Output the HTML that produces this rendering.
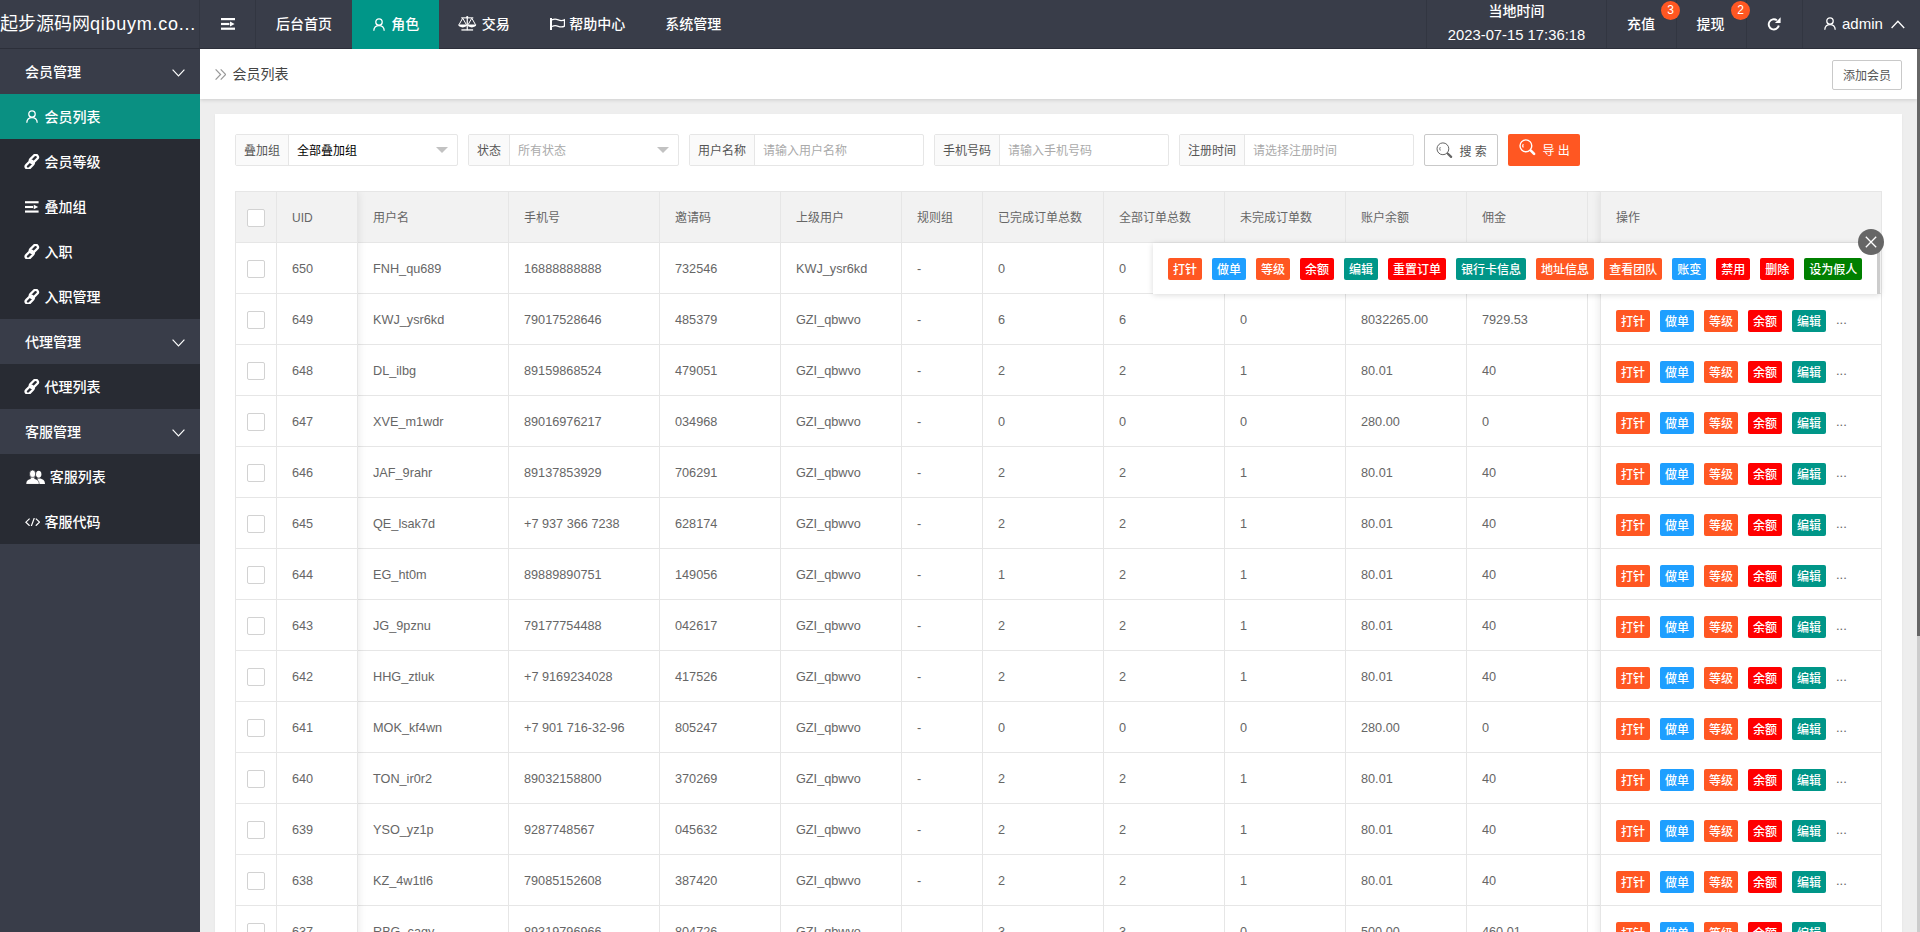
<!DOCTYPE html>
<html lang="zh-CN">
<head>
<meta charset="utf-8">
<title>会员列表</title>
<style>
*{box-sizing:border-box;margin:0;padding:0}
html,body{width:1920px;height:932px;overflow:hidden}
body{font-family:"Liberation Sans","Noto Sans CJK SC",sans-serif;font-size:14px;color:#333;background:#eee;position:relative}
svg{display:block}
ul{list-style:none}

/* ---------- header ---------- */
.hd{position:absolute;left:0;top:0;width:1920px;height:49px;background:#393d49;border-bottom:1px solid #2c2f3a;color:#fff}
.logo{position:absolute;left:0;top:0;width:200px;height:48px;line-height:49px;font-size:18px;white-space:nowrap;overflow:hidden;border-right:1px solid #323641}
.logo b{font-weight:normal;letter-spacing:.75px}
.nav{position:absolute;top:0;height:48px}
.nav .it{position:absolute;top:0;height:48px;line-height:48px;font-size:14px;white-space:nowrap;text-align:left}
.nav .it.bl{border-left:1px solid #333743}
.nav .it.on{background:#009688}
.ic{position:absolute}
.vl{position:absolute;top:0;width:1px;height:48px;background:#323641}
.ni{position:absolute;top:0;height:48px;line-height:48px;font-size:14px;font-weight:500;white-space:nowrap;color:#fff}
.nbg{position:absolute;top:0;height:49px;background:#009688}
.bdg{position:absolute;top:1px;width:19px;height:19px;border-radius:10px;background:#ff5722;color:#fff;font-size:12px;line-height:19px;text-align:center}


/* ---------- side ---------- */
.side{position:absolute;left:0;top:49px;width:200px;height:883px;background:#393d49;color:#fff}
.side li{font-weight:500;position:relative;height:45px;line-height:47px;font-size:14px;white-space:nowrap}
.side li.p{padding-left:25px;background:#393d49}
.side li.c{background:#282b33}
.side li.c span{position:absolute;left:44.5px;top:0}
.side li.on{background:#0a9082}
.side li .ar{position:absolute;left:172px;top:19.800px}

/* ---------- body ---------- */
.main{position:absolute;left:200px;top:49px;width:1717px;height:883px;background:#eee;overflow:hidden}
.bc{position:absolute;left:0;top:0;width:1717px;height:50px;background:#fff;box-shadow:0 1px 4px rgba(0,0,0,.14)}
.bc .t{position:absolute;left:32.5px;top:0;line-height:50px;font-size:14px;color:#444}
.bc .add{position:absolute;left:1632px;top:11px;width:70px;height:30px;line-height:31px;border:1px solid #c9c9c9;border-radius:2px;font-size:12px;color:#555;text-align:center;background:#fff}
.card{position:absolute;left:15px;top:65px;width:1687px;height:900px;background:#fff;box-shadow:0 1px 2px rgba(0,0,0,.06)}
.sb{position:absolute;left:1917px;top:49px;width:3px;height:883px;background:#ccc}
.sb i{position:absolute;left:0;top:0;width:3px;height:587px;background:#666}

/* ---------- form ---------- */
.form{position:absolute;left:20px;top:20px;height:32px;white-space:nowrap;font-size:12px}
.fg{position:relative;float:left;height:32px;margin-right:10px;border:1px solid #e6e6e6;border-radius:2px;background:#fff;display:flex}
.fg label{display:block;height:30px;line-height:32px;padding:0;text-align:center;background:#fafafa;border-right:1px solid #e6e6e6;color:#555;font-size:12px}
.fg .sel,.fg .inp{position:relative;width:168px;height:30px;line-height:32px;padding-left:8px;color:#aaa;font-size:12px}
.tri{position:absolute;right:9.500px;top:12px;width:0;height:0;border:6px solid transparent;border-top-color:#c2c2c2;border-bottom-width:0}
.btn1,.btn2{position:relative;float:left;height:32px;line-height:30px;border:1px solid #c9c9c9;border-radius:2px;background:#fff;color:#555;font-size:12px;margin-right:10px}
.btn1{width:74px}
.btn1 svg{position:absolute;left:11px;top:6.500px}
.btn1 span{position:absolute;left:34.500px;top:1.500px;white-space:pre}
.btn2{width:72px;border:none;background:#ff5722;color:#fff;line-height:32px}
.btn2 svg{position:absolute;left:10.500px;top:5px}
.btn2 span{position:absolute;left:34.500px;top:.5px;white-space:pre}

/* ---------- table ---------- */
.tbl{position:absolute;left:20px;top:77px;width:1647px;border-left:1px solid #e6e6e6;border-top:1px solid #e6e6e6;border-right:1px solid #e6e6e6;overflow:hidden;font-size:12.700px;color:#666}
.tr{display:flex;height:51px;width:1800px}
.td{flex:none;height:51px;line-height:52px;padding-left:15px;border-right:1px solid #e6e6e6;border-bottom:1px solid #e6e6e6;white-space:nowrap;overflow:hidden;position:relative}
.th .td{background:#f2f2f2;font-size:12px;color:#666}
.cb{position:absolute;left:11px;top:17px;width:18px;height:18px;border:1px solid #d2d2d2;border-radius:2px;background:#fff}
.fixl{position:absolute;left:21px;top:78px;width:122px;height:900px;box-shadow:1px 0 8px rgba(0,0,0,.08);pointer-events:none;clip-path:inset(0 -12px 0 0)}
.fixr{position:absolute;left:1385px;top:77px;width:282px;border-left:1px solid #e6e6e6;border-top:1px solid #e6e6e6;border-right:1px solid #e6e6e6;background:#fff;box-shadow:-1px 0 8px rgba(0,0,0,.08);clip-path:inset(0 0 0 -12px)}
.fh{height:51px;line-height:52px;padding-left:15px;background:#f2f2f2;border-bottom:1px solid #e6e6e6;font-size:12px;color:#666}
.fc{position:relative;height:51px;border-bottom:1px solid #e6e6e6;white-space:nowrap;overflow:hidden}
.fc b,.tips b{position:absolute;top:16px;height:22px;line-height:24px;font-weight:500;padding:0 5px;border-radius:2px;color:#fff;font-size:12px;text-align:center}
.o{background:#ff5722}.b{background:#1e9fff}.r{background:#f00}.g{background:#009688}.gr{background:#008000}
.fc b:nth-child(1){left:15px}.fc b:nth-child(2){left:59px}.fc b:nth-child(3){left:103px}.fc b:nth-child(4){left:147px}.fc b:nth-child(5){left:191px}
.fc .el{position:absolute;left:235px;top:15px;line-height:22px;font-size:13px;color:#666}
.tips{position:absolute;left:938px;top:129px;width:727px;height:51px;background:#fff;box-shadow:0 1px 6px rgba(0,0,0,.15)}
.tips{padding-left:15px;white-space:nowrap;font-size:0}
.tips b{position:static;display:inline-block;margin:15px 10px 0 0;vertical-align:top}
.tsb{position:absolute;right:0;top:0;width:3px;height:51px;background:#ccc}
.tclose{position:absolute;left:1643px;top:115px;width:26px;height:26px;border-radius:13px;background:#666}
.tclose svg{position:absolute;left:7px;top:7px}
</style>
</head>
<body>

<div class="hd">
  <div class="logo">起步源码网<b>qibuym.co...</b></div>
  <div class="vl" style="left:255px"></div>
  <div class="vl" style="left:1426px"></div>
  <div class="vl" style="left:1606px"></div>
  <div class="vl" style="left:1676px"></div>
  <div class="vl" style="left:1746px"></div>
  <div class="vl" style="left:1802px"></div>
  <svg class="ic" style="left:221.2px;top:17.9px" width="14" height="12" viewBox="0 0 14 12" fill="#fff"><rect x="0" y="0" width="14" height="2.2"/><rect x="0" y="4.9" width="8.4" height="2.2"/><path d="M9 3.6L13.6 6L9 8.4z"/><rect x="0" y="9.6" width="14" height="2.2"/></svg>
  <div class="ni" style="left:276px">后台首页</div>
  <div class="nbg" style="left:352px;width:87px"></div>
  <svg class="ic" style="left:373.2px;top:17.5px" width="12" height="13" viewBox="0 0 12 13" fill="none" stroke="#fff" stroke-width="1.3"><circle cx="6" cy="4" r="3.2"/><path d="M.8 12.8C.8 9.2 3.2 7.6 6 7.6S11.200 9.200 11.200 12.800"/></svg>
  <div class="ni" style="left:391.2px">角色</div>
  <svg class="ic" style="left:458.3px;top:16.3px" width="18.500" height="15.200" viewBox="0 0 18.500 15.200" fill="#fff" stroke="none"><circle cx="9.25" cy="1.2" r="1.1"/><rect x="3.2" y="1.300" width="12.100" height="1.100"/><rect x="8.650" y="1.200" width="1.200" height="13"/><rect x="3.400" y="13.300" width="11.700" height="1.300"/><path d="M4.700 2.200L1 8.700M4.700 2.200L8.400 8.700M13.800 2.200L10.100 8.700M13.800 2.200L17.500 8.700" stroke="#fff" stroke-width="1" fill="none"/><path d="M.2 8.600h9c0 1.700-2 2.800-4.500 2.800S.2 10.300.2 8.600zM9.300 8.600h9c0 1.700-2 2.800-4.500 2.800s-4.500-1.100-4.500-2.800z"/></svg>
  <div class="ni" style="left:481.7px">交易</div>
  <svg class="ic" style="left:550.2px;top:17.8px" width="15.200" height="12.400" viewBox="0 0 15.200 12.400" fill="none" stroke="#fff" stroke-width="1.300"><rect x="0" y="0" width="2" height="12.400" fill="#fff" stroke="none"/><path d="M2 1.900C4.200 .8 6.200 1 8.300 1.900s4.100 .900 6.200-.100V8.100C12.400 9.200 10.400 9.100 8.300 8.300S4.200 7.400 2 8.500"/></svg>
  <div class="ni" style="left:569.2px">帮助中心</div>
  <div class="ni" style="left:665.2px">系统管理</div>

  <div class="ni tm" style="left:1427px;width:179px;top:0;line-height:22px;text-align:center">当地时间</div>
  <div class="ni tm" style="left:1427px;width:179px;top:23px;line-height:24px;text-align:center;font-size:14.8px">2023-07-15 17:36:18</div>
  <div class="ni" style="left:1627px">充值</div>
  <div class="bdg" style="left:1661px">3</div>
  <div class="ni" style="left:1696.600px">提现</div>
  <div class="bdg" style="left:1731px">2</div>
  <svg class="ic" style="left:1767px;top:17px" width="14" height="13.500" viewBox="0 0 14 13.500" fill="none" stroke="#fff" stroke-width="1.900"><path d="M9.900 3.300A5.100 5.100 0 1 0 11.800 8.600"/><path d="M13.600 .3V6H7.900z" fill="#fff" stroke="none"/></svg>
  <svg class="ic" style="left:1824px;top:17.200px" width="12" height="13" viewBox="0 0 12 13" fill="none" stroke="#fff" stroke-width="1.300"><circle cx="6" cy="4" r="3.200"/><path d="M.8 12.800C.8 9.200 3.200 7.600 6 7.600S11.200 9.200 11.200 12.800"/></svg>
  <div class="ni" style="left:1842px;font-size:15px">admin</div>
  <svg class="ic" style="left:1891.300px;top:19.500px" width="14" height="9" viewBox="0 0 14 9" fill="none" stroke="#fff" stroke-width="1.300"><path d="M.6 8L6.900 1.200L13.200 8"/></svg>
</div>

<div class="side">
<ul>
  <li class="p">会员管理<svg class="ar" width="13" height="8" viewBox="0 0 13 8" fill="none" stroke="#fff" stroke-width="1.150"><path d="M.6 .6L6.500 6.800L12.400 .6"/></svg></li>
  <li class="c on"><svg class="ic" style="left:26.400px;top:16.400px" width="12" height="13" viewBox="0 0 12 13" fill="none" stroke="#fff" stroke-width="1.300"><circle cx="6" cy="4" r="3.200"/><path d="M.8 12.800C.8 9.200 3.200 7.600 6 7.600S11.200 9.200 11.200 12.800"/></svg><span>会员列表</span></li>
  <li class="c"><svg class="ic" style="left:24.200px;top:14.900px" width="15.600" height="15.600" viewBox="0 0 15.600 15.600" fill="none" stroke="#fff" stroke-width="2.300"><g transform="translate(7.800 7.800) rotate(-45)"><rect x="-8.300" y="-1.700" width="9.400" height="4.600" rx="2.300"/><rect x="-1.100" y="-2.900" width="9.400" height="4.600" rx="2.300"/></g></svg><span>会员等级</span></li>
  <li class="c"><svg class="ic" style="left:25.400px;top:16.800px" width="13.600" height="12" viewBox="0 0 14 12" fill="#fff"><rect x="0" y="0" width="14" height="2.200"/><rect x="0" y="4.900" width="8.400" height="2.200"/><path d="M9 3.600L13.600 6L9 8.400z"/><rect x="0" y="9.600" width="14" height="2.200"/></svg><span>叠加组</span></li>
  <li class="c"><svg class="ic" style="left:24.200px;top:14.900px" width="15.600" height="15.600" viewBox="0 0 15.600 15.600" fill="none" stroke="#fff" stroke-width="2.300"><g transform="translate(7.800 7.800) rotate(-45)"><rect x="-8.300" y="-1.700" width="9.400" height="4.600" rx="2.300"/><rect x="-1.100" y="-2.900" width="9.400" height="4.600" rx="2.300"/></g></svg><span>入职</span></li>
  <li class="c"><svg class="ic" style="left:24.200px;top:14.900px" width="15.600" height="15.600" viewBox="0 0 15.600 15.600" fill="none" stroke="#fff" stroke-width="2.300"><g transform="translate(7.800 7.800) rotate(-45)"><rect x="-8.300" y="-1.700" width="9.400" height="4.600" rx="2.300"/><rect x="-1.100" y="-2.900" width="9.400" height="4.600" rx="2.300"/></g></svg><span>入职管理</span></li>
  <li class="p">代理管理<svg class="ar" width="13" height="8" viewBox="0 0 13 8" fill="none" stroke="#fff" stroke-width="1.150"><path d="M.6 .6L6.500 6.800L12.400 .6"/></svg></li>
  <li class="c"><svg class="ic" style="left:24.200px;top:14.900px" width="15.600" height="15.600" viewBox="0 0 15.600 15.600" fill="none" stroke="#fff" stroke-width="2.300"><g transform="translate(7.800 7.800) rotate(-45)"><rect x="-8.300" y="-1.700" width="9.400" height="4.600" rx="2.300"/><rect x="-1.100" y="-2.900" width="9.400" height="4.600" rx="2.300"/></g></svg><span>代理列表</span></li>
  <li class="p">客服管理<svg class="ar" width="13" height="8" viewBox="0 0 13 8" fill="none" stroke="#fff" stroke-width="1.150"><path d="M.6 .6L6.500 6.800L12.400 .6"/></svg></li>
  <li class="c"><svg class="ic" style="left:25.600px;top:15.500px" width="19" height="14.400" viewBox="0 0 19 14.400" fill="#fff"><ellipse cx="12.700" cy="4.300" rx="2.700" ry="3.500"/><path d="M11.300 8.600L14.300 8.600C16.800 9.500 19 10.300 19 14.400L13.400 14.400z"/><ellipse cx="6.600" cy="3.900" rx="3.100" ry="3.900" stroke="#282b33" stroke-width=".7"/><path d="M4.600 7.300L8.600 7.300L8.600 8.700C11.200 9.600 13.200 10.300 13.200 14.400L0 14.400C0 10.300 2 9.600 4.600 8.700z" stroke="#282b33" stroke-width=".5"/></svg><span style="left:49.800px">客服列表</span></li>
  <li class="c"><svg class="ic" style="left:24.500px;top:18.800px" width="15.400" height="8.400" viewBox="0 0 15.400 8.400" fill="none" stroke="#fff" stroke-width="1.200"><path d="M4.600 .6L.9 4.200L4.600 7.800M9.300 0L6.200 8.400M10.800 .6L14.500 4.200L10.800 7.800"/></svg><span>客服代码</span></li>
</ul>
</div>

<div class="main">
  <div class="card">
<div class="form">
  <div class="fg"><label style="width:53px">叠加组</label><div class="sel" style="color:#000">全部叠加组<i class="tri"></i></div></div>
  <div class="fg"><label style="width:41px">状态</label><div class="sel">所有状态<i class="tri"></i></div></div>
  <div class="fg"><label style="width:65px">用户名称</label><div class="inp">请输入用户名称</div></div>
  <div class="fg"><label style="width:65px">手机号码</label><div class="inp">请输入手机号码</div></div>
  <div class="fg"><label style="width:65px">注册时间</label><div class="inp">请选择注册时间</div></div>
  <div class="btn1"><svg width="17" height="17" viewBox="0 0 17 17" fill="none" stroke="#666" stroke-width="1"><circle cx="6.900" cy="6.800" r="5.900"/><path d="M11.900 11.700L15.100 14.900" stroke-width="2.300" stroke-linecap="round"/><path d="M4.300 5.100A2.900 2.900 0 0 0 4.300 8.500" stroke-width=".9"/></svg><span>搜 索</span></div>
  <div class="btn2"><svg width="17" height="17" viewBox="0 0 17 17" fill="none" stroke="#fff" stroke-width="1.400"><circle cx="6.900" cy="6.800" r="5.900"/><path d="M11.900 11.700L15.100 14.900" stroke-width="2.600" stroke-linecap="round"/><path d="M4.300 5.100A2.900 2.900 0 0 0 4.300 8.500" stroke-width="1.200"/></svg><span>导 出</span></div>
</div>
<div class="tbl">
<div class="tr th"><div class="td" style="width:41px"><i class="cb"></i></div><div class="td" style="width:81px">UID</div><div class="td" style="width:151px">用户名</div><div class="td" style="width:151px">手机号</div><div class="td" style="width:121px">邀请码</div><div class="td" style="width:121px">上级用户</div><div class="td" style="width:81px">规则组</div><div class="td" style="width:121px">已完成订单总数</div><div class="td" style="width:121px">全部订单总数</div><div class="td" style="width:121px">未完成订单数</div><div class="td" style="width:121px">账户余额</div><div class="td" style="width:121px">佣金</div><div class="td" style="width:300px"></div></div>
<div class="tr"><div class="td" style="width:41px"><i class="cb"></i></div><div class="td" style="width:81px">650</div><div class="td" style="width:151px">FNH_qu689</div><div class="td" style="width:151px">16888888888</div><div class="td" style="width:121px">732546</div><div class="td" style="width:121px">KWJ_ysr6kd</div><div class="td" style="width:81px">-</div><div class="td" style="width:121px">0</div><div class="td" style="width:121px">0</div><div class="td" style="width:121px"></div><div class="td" style="width:121px"></div><div class="td" style="width:121px"></div><div class="td" style="width:300px"></div></div>
<div class="tr"><div class="td" style="width:41px"><i class="cb"></i></div><div class="td" style="width:81px">649</div><div class="td" style="width:151px">KWJ_ysr6kd</div><div class="td" style="width:151px">79017528646</div><div class="td" style="width:121px">485379</div><div class="td" style="width:121px">GZI_qbwvo</div><div class="td" style="width:81px">-</div><div class="td" style="width:121px">6</div><div class="td" style="width:121px">6</div><div class="td" style="width:121px">0</div><div class="td" style="width:121px">8032265.00</div><div class="td" style="width:121px">7929.53</div><div class="td" style="width:300px"></div></div>
<div class="tr"><div class="td" style="width:41px"><i class="cb"></i></div><div class="td" style="width:81px">648</div><div class="td" style="width:151px">DL_ilbg</div><div class="td" style="width:151px">89159868524</div><div class="td" style="width:121px">479051</div><div class="td" style="width:121px">GZI_qbwvo</div><div class="td" style="width:81px">-</div><div class="td" style="width:121px">2</div><div class="td" style="width:121px">2</div><div class="td" style="width:121px">1</div><div class="td" style="width:121px">80.01</div><div class="td" style="width:121px">40</div><div class="td" style="width:300px"></div></div>
<div class="tr"><div class="td" style="width:41px"><i class="cb"></i></div><div class="td" style="width:81px">647</div><div class="td" style="width:151px">XVE_m1wdr</div><div class="td" style="width:151px">89016976217</div><div class="td" style="width:121px">034968</div><div class="td" style="width:121px">GZI_qbwvo</div><div class="td" style="width:81px">-</div><div class="td" style="width:121px">0</div><div class="td" style="width:121px">0</div><div class="td" style="width:121px">0</div><div class="td" style="width:121px">280.00</div><div class="td" style="width:121px">0</div><div class="td" style="width:300px"></div></div>
<div class="tr"><div class="td" style="width:41px"><i class="cb"></i></div><div class="td" style="width:81px">646</div><div class="td" style="width:151px">JAF_9rahr</div><div class="td" style="width:151px">89137853929</div><div class="td" style="width:121px">706291</div><div class="td" style="width:121px">GZI_qbwvo</div><div class="td" style="width:81px">-</div><div class="td" style="width:121px">2</div><div class="td" style="width:121px">2</div><div class="td" style="width:121px">1</div><div class="td" style="width:121px">80.01</div><div class="td" style="width:121px">40</div><div class="td" style="width:300px"></div></div>
<div class="tr"><div class="td" style="width:41px"><i class="cb"></i></div><div class="td" style="width:81px">645</div><div class="td" style="width:151px">QE_lsak7d</div><div class="td" style="width:151px">+7 937 366 7238</div><div class="td" style="width:121px">628174</div><div class="td" style="width:121px">GZI_qbwvo</div><div class="td" style="width:81px">-</div><div class="td" style="width:121px">2</div><div class="td" style="width:121px">2</div><div class="td" style="width:121px">1</div><div class="td" style="width:121px">80.01</div><div class="td" style="width:121px">40</div><div class="td" style="width:300px"></div></div>
<div class="tr"><div class="td" style="width:41px"><i class="cb"></i></div><div class="td" style="width:81px">644</div><div class="td" style="width:151px">EG_ht0m</div><div class="td" style="width:151px">89889890751</div><div class="td" style="width:121px">149056</div><div class="td" style="width:121px">GZI_qbwvo</div><div class="td" style="width:81px">-</div><div class="td" style="width:121px">1</div><div class="td" style="width:121px">2</div><div class="td" style="width:121px">1</div><div class="td" style="width:121px">80.01</div><div class="td" style="width:121px">40</div><div class="td" style="width:300px"></div></div>
<div class="tr"><div class="td" style="width:41px"><i class="cb"></i></div><div class="td" style="width:81px">643</div><div class="td" style="width:151px">JG_9pznu</div><div class="td" style="width:151px">79177754488</div><div class="td" style="width:121px">042617</div><div class="td" style="width:121px">GZI_qbwvo</div><div class="td" style="width:81px">-</div><div class="td" style="width:121px">2</div><div class="td" style="width:121px">2</div><div class="td" style="width:121px">1</div><div class="td" style="width:121px">80.01</div><div class="td" style="width:121px">40</div><div class="td" style="width:300px"></div></div>
<div class="tr"><div class="td" style="width:41px"><i class="cb"></i></div><div class="td" style="width:81px">642</div><div class="td" style="width:151px">HHG_ztluk</div><div class="td" style="width:151px">+7 9169234028</div><div class="td" style="width:121px">417526</div><div class="td" style="width:121px">GZI_qbwvo</div><div class="td" style="width:81px">-</div><div class="td" style="width:121px">2</div><div class="td" style="width:121px">2</div><div class="td" style="width:121px">1</div><div class="td" style="width:121px">80.01</div><div class="td" style="width:121px">40</div><div class="td" style="width:300px"></div></div>
<div class="tr"><div class="td" style="width:41px"><i class="cb"></i></div><div class="td" style="width:81px">641</div><div class="td" style="width:151px">MOK_kf4wn</div><div class="td" style="width:151px">+7 901 716-32-96</div><div class="td" style="width:121px">805247</div><div class="td" style="width:121px">GZI_qbwvo</div><div class="td" style="width:81px">-</div><div class="td" style="width:121px">0</div><div class="td" style="width:121px">0</div><div class="td" style="width:121px">0</div><div class="td" style="width:121px">280.00</div><div class="td" style="width:121px">0</div><div class="td" style="width:300px"></div></div>
<div class="tr"><div class="td" style="width:41px"><i class="cb"></i></div><div class="td" style="width:81px">640</div><div class="td" style="width:151px">TON_ir0r2</div><div class="td" style="width:151px">89032158800</div><div class="td" style="width:121px">370269</div><div class="td" style="width:121px">GZI_qbwvo</div><div class="td" style="width:81px">-</div><div class="td" style="width:121px">2</div><div class="td" style="width:121px">2</div><div class="td" style="width:121px">1</div><div class="td" style="width:121px">80.01</div><div class="td" style="width:121px">40</div><div class="td" style="width:300px"></div></div>
<div class="tr"><div class="td" style="width:41px"><i class="cb"></i></div><div class="td" style="width:81px">639</div><div class="td" style="width:151px">YSO_yz1p</div><div class="td" style="width:151px">9287748567</div><div class="td" style="width:121px">045632</div><div class="td" style="width:121px">GZI_qbwvo</div><div class="td" style="width:81px">-</div><div class="td" style="width:121px">2</div><div class="td" style="width:121px">2</div><div class="td" style="width:121px">1</div><div class="td" style="width:121px">80.01</div><div class="td" style="width:121px">40</div><div class="td" style="width:300px"></div></div>
<div class="tr"><div class="td" style="width:41px"><i class="cb"></i></div><div class="td" style="width:81px">638</div><div class="td" style="width:151px">KZ_4w1tl6</div><div class="td" style="width:151px">79085152608</div><div class="td" style="width:121px">387420</div><div class="td" style="width:121px">GZI_qbwvo</div><div class="td" style="width:81px">-</div><div class="td" style="width:121px">2</div><div class="td" style="width:121px">2</div><div class="td" style="width:121px">1</div><div class="td" style="width:121px">80.01</div><div class="td" style="width:121px">40</div><div class="td" style="width:300px"></div></div>
<div class="tr"><div class="td" style="width:41px"><i class="cb"></i></div><div class="td" style="width:81px">637</div><div class="td" style="width:151px">RBG_cagy</div><div class="td" style="width:151px">89319796966</div><div class="td" style="width:121px">804726</div><div class="td" style="width:121px">GZI_qbwvo</div><div class="td" style="width:81px">-</div><div class="td" style="width:121px">3</div><div class="td" style="width:121px">3</div><div class="td" style="width:121px">0</div><div class="td" style="width:121px">500.00</div><div class="td" style="width:121px">460.01</div><div class="td" style="width:300px"></div></div>
</div>
<div class="fixl"></div>
<div class="fixr">
<div class="fh">操作</div>
<div class="fc"><b class="o">打针</b><b class="b">做单</b><b class="o">等级</b><b class="r">余额</b><b class="g">编辑</b><span class="el">...</span></div>
<div class="fc"><b class="o">打针</b><b class="b">做单</b><b class="o">等级</b><b class="r">余额</b><b class="g">编辑</b><span class="el">...</span></div>
<div class="fc"><b class="o">打针</b><b class="b">做单</b><b class="o">等级</b><b class="r">余额</b><b class="g">编辑</b><span class="el">...</span></div>
<div class="fc"><b class="o">打针</b><b class="b">做单</b><b class="o">等级</b><b class="r">余额</b><b class="g">编辑</b><span class="el">...</span></div>
<div class="fc"><b class="o">打针</b><b class="b">做单</b><b class="o">等级</b><b class="r">余额</b><b class="g">编辑</b><span class="el">...</span></div>
<div class="fc"><b class="o">打针</b><b class="b">做单</b><b class="o">等级</b><b class="r">余额</b><b class="g">编辑</b><span class="el">...</span></div>
<div class="fc"><b class="o">打针</b><b class="b">做单</b><b class="o">等级</b><b class="r">余额</b><b class="g">编辑</b><span class="el">...</span></div>
<div class="fc"><b class="o">打针</b><b class="b">做单</b><b class="o">等级</b><b class="r">余额</b><b class="g">编辑</b><span class="el">...</span></div>
<div class="fc"><b class="o">打针</b><b class="b">做单</b><b class="o">等级</b><b class="r">余额</b><b class="g">编辑</b><span class="el">...</span></div>
<div class="fc"><b class="o">打针</b><b class="b">做单</b><b class="o">等级</b><b class="r">余额</b><b class="g">编辑</b><span class="el">...</span></div>
<div class="fc"><b class="o">打针</b><b class="b">做单</b><b class="o">等级</b><b class="r">余额</b><b class="g">编辑</b><span class="el">...</span></div>
<div class="fc"><b class="o">打针</b><b class="b">做单</b><b class="o">等级</b><b class="r">余额</b><b class="g">编辑</b><span class="el">...</span></div>
<div class="fc"><b class="o">打针</b><b class="b">做单</b><b class="o">等级</b><b class="r">余额</b><b class="g">编辑</b><span class="el">...</span></div>
<div class="fc"><b class="o">打针</b><b class="b">做单</b><b class="o">等级</b><b class="r">余额</b><b class="g">编辑</b><span class="el">...</span></div>
</div>
<div class="tips"><b class="o">打针</b><b class="b">做单</b><b class="o">等级</b><b class="r">余额</b><b class="g">编辑</b><b class="r">重置订单</b><b class="g">银行卡信息</b><b class="o">地址信息</b><b class="o">查看团队</b><b class="b">账变</b><b class="r">禁用</b><b class="r">删除</b><b class="gr">设为假人</b><i class="tsb"></i></div>
<div class="tclose"><svg width="12" height="12" viewBox="0 0 12 12" stroke="#fff" stroke-width="1.300" fill="none"><path d="M.8 .8L11.200 11.200M11.200 .8L.8 11.200"/></svg></div>
</div>
  <div class="bc"><svg class="ic" style="left:15.400px;top:19.800px" width="11" height="11" viewBox="0 0 11 11" fill="none" stroke="#999" stroke-width="1.200"><path d="M.6 .4L5.600 5.500L.6 10.600M5.700 .4L10.700 5.500L5.700 10.600"/></svg><div class="t">会员列表</div><div class="add">添加会员</div></div>
</div>
<div class="sb"><i></i></div>

</body>
</html>
